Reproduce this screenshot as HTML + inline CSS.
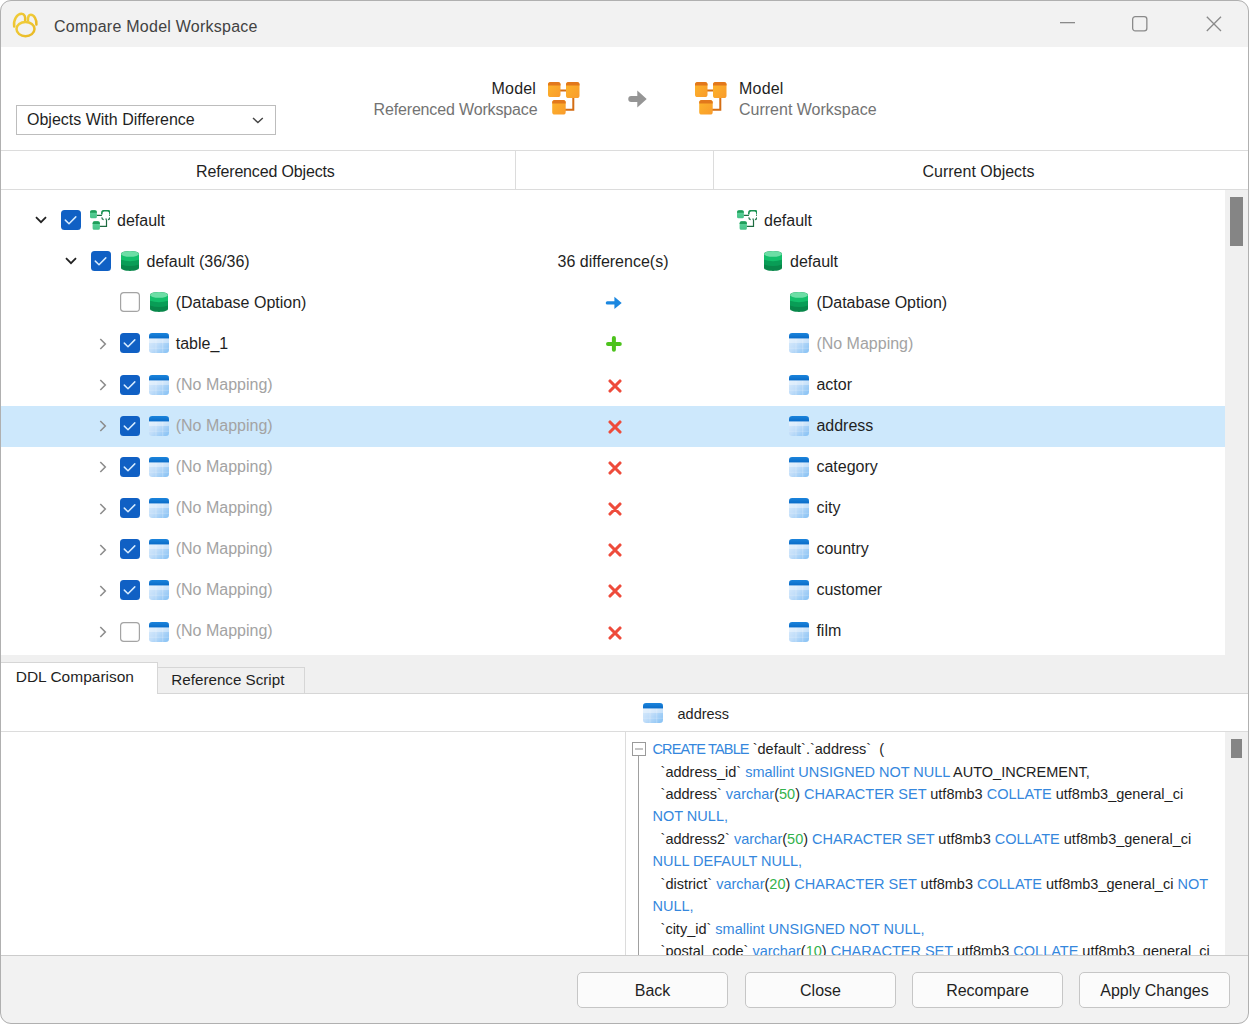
<!DOCTYPE html>
<html><head><meta charset="utf-8">
<style>
*{box-sizing:border-box;margin:0;padding:0}
html,body{width:1249px;height:1024px;overflow:hidden;background:#fff}
body{font-family:"Liberation Sans",sans-serif;font-size:16px;color:#1f1f1f;position:relative}
.a{position:absolute;white-space:pre;line-height:18px}
.frame{position:absolute;left:0;top:0;width:1249px;height:1024px;border:1px solid #b0b0b0;border-radius:11px;box-shadow:0 0 0 30px #fff;z-index:100}
.ln{position:absolute;background:#dadada}
svg{position:absolute;overflow:visible}
.cb{position:absolute;width:20px;height:20px;border-radius:3.5px;background:#1060c4}
.cb.u{background:#fff;border:1.3px solid #9a9a9a}
.gray{color:#a3a3a3}
.btn{position:absolute;top:972px;width:151px;height:36px;border:1px solid #c6c6c6;border-radius:5px;background:#fbfbfb;text-align:center;line-height:34px;font-size:16px;color:#1f1f1f}
.code{color:#1e1e1e}
.code .k{color:#3587dd}
.code .n{color:#33b24c}
</style></head><body>
<svg width="0" height="0" style="position:absolute">
<defs>
<symbol id="tbl" viewBox="0 0 20 20">
<clipPath id="tclip"><rect width="20" height="20" rx="3.2"/></clipPath>
<linearGradient id="tgrad" x1="0" y1="0" x2="1" y2="1"><stop offset="0" stop-color="#e4f1fd"/><stop offset="0.5" stop-color="#c0ddf9"/><stop offset="1" stop-color="#84c0f4"/></linearGradient>
<linearGradient id="tband" x1="0" y1="0" x2="0" y2="1"><stop offset="0" stop-color="#1b84dc"/><stop offset="1" stop-color="#0a6cc8"/></linearGradient>
<g clip-path="url(#tclip)">
<rect width="20" height="20" fill="url(#tgrad)"/>
<rect y="5.4" width="20" height="4.6" fill="#fff" opacity="0.35"/>
<rect x="6.6" y="5.4" width="0.8" height="15" fill="#fff" opacity="0.3"/>
<rect x="13.4" y="5.4" width="0.8" height="15" fill="#fff" opacity="0.3"/>
<rect y="14.8" width="20" height="0.8" fill="#fff" opacity="0.25"/>
<rect width="20" height="5.4" fill="url(#tband)"/>
</g>
</symbol>
<symbol id="db" viewBox="0 0 18 20">
<path d="M0 2.9C0 1.3 4 0 9 0s9 1.3 9 2.9V17.1C18 18.7 14 20 9 20S0 18.7 0 17.1z" fill="#08874a"/>
<path d="M0 2.9V13.6Q9 16.6 18 13.6V2.9z" fill="#099d56"/>
<path d="M0 2.9V8.8Q9 11.6 18 8.8V2.9z" fill="#13bf6b"/>
<ellipse cx="9" cy="2.9" rx="9" ry="2.9" fill="#6cdea5"/>
</symbol>
<symbol id="mdl" viewBox="0 0 20 20">
<linearGradient id="mg" x1="0" y1="0" x2="0" y2="1"><stop offset="0" stop-color="#5fd59c"/><stop offset="1" stop-color="#45c287"/></linearGradient>
<path d="M0 2.2a2 2 0 0 1 2-2h2.9a2 2 0 0 1 2 2v4.6a1.5 1.5 0 0 1-1.5 1.5h-3.9A1.5 1.5 0 0 1 0 6.8z" fill="url(#mg)"/>
<path d="M0 2.2a2 2 0 0 1 2-2h2.9a2 2 0 0 1 2 2v0.6H0z" fill="#1f9d5a"/>
<path d="M2.6 13.3a2 2 0 0 1 2-2h3.3a2 2 0 0 1 2 2v5a1.5 1.5 0 0 1-1.5 1.5h-4.3a1.5 1.5 0 0 1-1.5-1.5z" fill="url(#mg)"/>
<path d="M2.6 13.3a2 2 0 0 1 2-2h3.3a2 2 0 0 1 2 2v0.6H2.6z" fill="#1f9d5a"/>
<path d="M6.9 5.4h5M19.2 5.4h0.9M16.5 9.6v6.8H9.9" stroke="#1d6b40" stroke-width="1.2" fill="none"/>
<path d="M11.8 4.4V3a2.4 2.4 0 0 1 2.4-2.4h3.3a2.4 2.4 0 0 1 2.4 2.4v1.4" stroke="#1a9252" stroke-width="1.6" fill="none"/>
<path d="M11.8 7.4q0.2 1.9 1.9 2.3M19.9 7.4q-0.2 1.9-1.9 2.3M15.8 8.4l0.6 1.4" stroke="#2b7a52" stroke-width="1.3" fill="none"/>
</symbol>
<symbol id="omdl" viewBox="0 0 32 33">
<linearGradient id="og" x1="0" y1="0" x2="1" y2="1"><stop offset="0" stop-color="#fdb52a"/><stop offset="1" stop-color="#f99b2c"/></linearGradient>
<path d="M11 8.5h7M25.3 16v11.8H17" stroke="#d46e14" stroke-width="2" fill="none"/>
<rect x="0" y="0" width="12.5" height="15" rx="2.6" fill="url(#og)"/>
<path d="M0 2.6A2.6 2.6 0 0 1 2.6 0h7.3a2.6 2.6 0 0 1 2.6 2.6v0.9H0z" fill="#e2781c"/>
<rect x="18" y="0" width="13.5" height="16" rx="2.6" fill="url(#og)"/>
<path d="M18 2.6A2.6 2.6 0 0 1 20.6 0h8.3a2.6 2.6 0 0 1 2.6 2.6v0.9H18z" fill="#e2781c"/>
<rect x="4.2" y="18" width="13.5" height="14.5" rx="2.6" fill="url(#og)"/>
<path d="M4.2 20.6A2.6 2.6 0 0 1 6.8 18h8.3a2.6 2.6 0 0 1 2.6 2.6v0.9H4.2z" fill="#e2781c"/>
</symbol>
<symbol id="chk" viewBox="0 0 20 20">
<rect width="20" height="20" rx="3.5" fill="#1060c4"/>
<path d="M4.3 10.1L8 13.7L14.8 6.9" stroke="#d7ecff" stroke-width="1.5" fill="none" stroke-linecap="round" stroke-linejoin="round"/>
</symbol>
<symbol id="unchk" viewBox="0 0 20 20">
<rect x="0.6" y="0.6" width="18.8" height="18.8" rx="3.2" fill="#fff" stroke="#a4a4a4" stroke-width="1.2"/>
</symbol>
<symbol id="chevd" viewBox="0 0 12 8">
<path d="M1 1.2L6 6.2L11 1.2" stroke="#222" stroke-width="1.8" fill="none"/>
</symbol>
<symbol id="chevr" viewBox="0 0 8 12">
<path d="M1.3 1L6.3 6L1.3 11" stroke="#8c8c8c" stroke-width="1.55" fill="none"/>
</symbol>
<symbol id="xr" viewBox="0 0 14 14">
<path d="M2 2L12 12M12 2L2 12" stroke="#ee4b3b" stroke-width="3.1" stroke-linecap="round"/>
</symbol>
</defs>
</svg>
<div style="position:absolute;left:0px;top:0px;width:1249px;height:47px;background:#f2f2f2;"></div>
<svg style="left:11px;top:11px" width="28" height="28" viewBox="0 0 28 28">
<defs><linearGradient id="gold" x1="0" y1="0" x2="1" y2="1"><stop offset="0" stop-color="#f1cf3c"/><stop offset="1" stop-color="#e9b824"/></linearGradient></defs>
<path d="M3.2 15.5C2.2 9 6 2.8 10.5 2.8C13.5 2.8 14.6 6 14.1 9.5" stroke="url(#gold)" stroke-width="2.5" fill="none" stroke-linecap="round"/>
<path d="M17 9.2C16.8 5.2 18 3.8 19.8 3.8C23 3.8 25.9 8.5 25.4 13.6" stroke="url(#gold)" stroke-width="2.5" fill="none" stroke-linecap="round"/>
<ellipse cx="14.5" cy="18.1" rx="9" ry="7.1" stroke="url(#gold)" stroke-width="2.5" fill="none"/>
</svg>
<div class="a" style="left:54px;top:17.76px;font-size:16px;line-height:18px;color:#424242;letter-spacing:0.25px;">Compare Model Workspace</div>
<svg style="left:1060px;top:22px" width="16" height="2"><rect x="0" y="0" width="15" height="1.3" fill="#8a8a8a"/></svg>
<svg style="left:1132px;top:16px" width="16" height="16"><rect x="0.65" y="0.65" width="14.2" height="14.2" rx="2.6" stroke="#8a8a8a" stroke-width="1.3" fill="none"/></svg>
<svg style="left:1206px;top:16px" width="16" height="16"><path d="M0.8 0.8L15 15M15 0.8L0.8 15" stroke="#8a8a8a" stroke-width="1.3"/></svg>
<div style="position:absolute;left:16px;top:105px;width:260px;height:30px;border:1px solid #bdbdbd;background:#fff"></div>
<div class="a" style="left:27px;top:111.46px;font-size:16px;line-height:18px;color:#1f1f1f;">Objects With Difference</div>
<svg style="left:252px;top:117px" width="12" height="7"><path d="M1 1L5.9 5.6L10.8 1" stroke="#444" stroke-width="1.4" fill="none"/></svg>
<div class="a" style="left:491.5px;top:80.16px;font-size:16px;line-height:18px;color:#1f1f1f;letter-spacing:0.2px;">Model</div>
<div class="a" style="left:373.5px;top:100.86px;font-size:16px;line-height:18px;color:#737373;letter-spacing:-0.15px;">Referenced Workspace</div>
<svg style="left:548px;top:82px;" width="32" height="33"><use href="#omdl"/></svg>
<svg style="left:627px;top:90px" width="21" height="19"><path d="M4.2 6.1H10.3V0.6L19.7 9.1L10.3 17.6V12H4.2A2.95 2.95 0 0 1 4.2 6.1z" fill="#959595"/></svg>
<svg style="left:695px;top:82px;" width="32" height="33"><use href="#omdl"/></svg>
<div class="a" style="left:739px;top:80.16px;font-size:16px;line-height:18px;color:#1f1f1f;letter-spacing:0.2px;">Model</div>
<div class="a" style="left:739px;top:100.86px;font-size:16px;line-height:18px;color:#737373;">Current Workspace</div>
<div style="position:absolute;left:1px;top:150px;width:1247px;height:1px;background:#dcdcdc;"></div>
<div style="position:absolute;left:1px;top:189px;width:1247px;height:1px;background:#dcdcdc;"></div>
<div style="position:absolute;left:515px;top:150px;width:1px;height:39px;background:#dcdcdc;"></div>
<div style="position:absolute;left:713px;top:150px;width:1px;height:39px;background:#dcdcdc;"></div>
<div class="a" style="left:196px;top:163.46px;font-size:16px;line-height:18px;color:#1f1f1f;letter-spacing:-0.15px;">Referenced Objects</div>
<div class="a" style="left:922.5px;top:163.46px;font-size:16px;line-height:18px;color:#1f1f1f;">Current Objects</div>
<div style="position:absolute;left:1px;top:406px;width:1224px;height:41px;background:#cde8fc;"></div>
<div style="position:absolute;left:1225px;top:190px;width:23px;height:465px;background:#f0f0f0;"></div>
<div style="position:absolute;left:1230px;top:197px;width:13px;height:49px;background:#858585;"></div>
<svg style="left:35px;top:216px;" width="12" height="8"><use href="#chevd"/></svg>
<svg style="left:61px;top:210px;" width="20" height="20"><use href="#chk"/></svg>
<svg style="left:90px;top:210px;" width="20" height="20"><use href="#mdl"/></svg>
<div class="a" style="left:117px;top:211.56px;font-size:16px;line-height:18px;">default</div>
<svg style="left:737px;top:210px;" width="20" height="20"><use href="#mdl"/></svg>
<div class="a" style="left:764px;top:211.56px;font-size:16px;line-height:18px;">default</div>
<svg style="left:65px;top:257px;" width="12" height="8"><use href="#chevd"/></svg>
<svg style="left:91px;top:251px;" width="20" height="20"><use href="#chk"/></svg>
<svg style="left:121px;top:251px;" width="18" height="20"><use href="#db"/></svg>
<div class="a" style="left:146.5px;top:252.64px;font-size:16px;line-height:18px;">default (36/36)</div>
<div class="a" style="left:557.6px;top:252.64px;font-size:16px;line-height:18px;">36 difference(s)</div>
<svg style="left:764px;top:251px;" width="18" height="20"><use href="#db"/></svg>
<div class="a" style="left:790px;top:252.64px;font-size:16px;line-height:18px;">default</div>
<svg style="left:120px;top:292px;" width="20" height="20"><use href="#unchk"/></svg>
<svg style="left:150px;top:292px;" width="18" height="20"><use href="#db"/></svg>
<div class="a" style="left:175.7px;top:293.72px;font-size:16px;line-height:18px;">(Database Option)</div>
<svg style="left:605px;top:296px" width="18" height="14"><path d="M2.4 5.2H9.4V0.8L16.7 6.9L9.4 12.9V8.6H2.4A1.7 1.7 0 0 1 2.4 5.2z" fill="#1b87e0"/></svg>
<svg style="left:790px;top:292px;" width="18" height="20"><use href="#db"/></svg>
<div class="a" style="left:816.4px;top:293.72px;font-size:16px;line-height:18px;">(Database Option)</div>
<svg style="left:98.5px;top:338px;" width="8" height="12"><use href="#chevr"/></svg>
<svg style="left:120px;top:333px;" width="20" height="20"><use href="#chk"/></svg>
<svg style="left:149px;top:333px;" width="20" height="20"><use href="#tbl"/></svg>
<div class="a" style="left:175.7px;top:334.80px;font-size:16px;line-height:18px;">table_1</div>
<svg style="left:605px;top:335px" width="18" height="18"><path d="M8.9 3V14.8M3 8.9H14.8" stroke="#4cc21c" stroke-width="4" stroke-linecap="round"/></svg>
<svg style="left:789px;top:333px;" width="20" height="20"><use href="#tbl"/></svg>
<div class="a" style="left:816.4px;top:334.80px;font-size:16px;line-height:18px;color:#a3a3a3;">(No Mapping)</div>
<svg style="left:98.5px;top:379px;" width="8" height="12"><use href="#chevr"/></svg>
<svg style="left:120px;top:375px;" width="20" height="20"><use href="#chk"/></svg>
<svg style="left:149px;top:375px;" width="20" height="20"><use href="#tbl"/></svg>
<div class="a" style="left:175.7px;top:375.88px;font-size:16px;line-height:18px;color:#a3a3a3;">(No Mapping)</div>
<svg style="left:607.5px;top:379px;" width="14" height="14"><use href="#xr"/></svg>
<svg style="left:789px;top:375px;" width="20" height="20"><use href="#tbl"/></svg>
<div class="a" style="left:816.4px;top:375.88px;font-size:16px;line-height:18px;">actor</div>
<svg style="left:98.5px;top:420px;" width="8" height="12"><use href="#chevr"/></svg>
<svg style="left:120px;top:416px;" width="20" height="20"><use href="#chk"/></svg>
<svg style="left:149px;top:416px;" width="20" height="20"><use href="#tbl"/></svg>
<div class="a" style="left:175.7px;top:416.96px;font-size:16px;line-height:18px;color:#a3a3a3;">(No Mapping)</div>
<svg style="left:607.5px;top:420px;" width="14" height="14"><use href="#xr"/></svg>
<svg style="left:789px;top:416px;" width="20" height="20"><use href="#tbl"/></svg>
<div class="a" style="left:816.4px;top:416.96px;font-size:16px;line-height:18px;">address</div>
<svg style="left:98.5px;top:461px;" width="8" height="12"><use href="#chevr"/></svg>
<svg style="left:120px;top:457px;" width="20" height="20"><use href="#chk"/></svg>
<svg style="left:149px;top:457px;" width="20" height="20"><use href="#tbl"/></svg>
<div class="a" style="left:175.7px;top:458.04px;font-size:16px;line-height:18px;color:#a3a3a3;">(No Mapping)</div>
<svg style="left:607.5px;top:461px;" width="14" height="14"><use href="#xr"/></svg>
<svg style="left:789px;top:457px;" width="20" height="20"><use href="#tbl"/></svg>
<div class="a" style="left:816.4px;top:458.04px;font-size:16px;line-height:18px;">category</div>
<svg style="left:98.5px;top:503px;" width="8" height="12"><use href="#chevr"/></svg>
<svg style="left:120px;top:498px;" width="20" height="20"><use href="#chk"/></svg>
<svg style="left:149px;top:498px;" width="20" height="20"><use href="#tbl"/></svg>
<div class="a" style="left:175.7px;top:499.12px;font-size:16px;line-height:18px;color:#a3a3a3;">(No Mapping)</div>
<svg style="left:607.5px;top:502px;" width="14" height="14"><use href="#xr"/></svg>
<svg style="left:789px;top:498px;" width="20" height="20"><use href="#tbl"/></svg>
<div class="a" style="left:816.4px;top:499.12px;font-size:16px;line-height:18px;">city</div>
<svg style="left:98.5px;top:544px;" width="8" height="12"><use href="#chevr"/></svg>
<svg style="left:120px;top:539px;" width="20" height="20"><use href="#chk"/></svg>
<svg style="left:149px;top:539px;" width="20" height="20"><use href="#tbl"/></svg>
<div class="a" style="left:175.7px;top:540.20px;font-size:16px;line-height:18px;color:#a3a3a3;">(No Mapping)</div>
<svg style="left:607.5px;top:543px;" width="14" height="14"><use href="#xr"/></svg>
<svg style="left:789px;top:539px;" width="20" height="20"><use href="#tbl"/></svg>
<div class="a" style="left:816.4px;top:540.20px;font-size:16px;line-height:18px;">country</div>
<svg style="left:98.5px;top:585px;" width="8" height="12"><use href="#chevr"/></svg>
<svg style="left:120px;top:580px;" width="20" height="20"><use href="#chk"/></svg>
<svg style="left:149px;top:580px;" width="20" height="20"><use href="#tbl"/></svg>
<div class="a" style="left:175.7px;top:581.28px;font-size:16px;line-height:18px;color:#a3a3a3;">(No Mapping)</div>
<svg style="left:607.5px;top:584px;" width="14" height="14"><use href="#xr"/></svg>
<svg style="left:789px;top:580px;" width="20" height="20"><use href="#tbl"/></svg>
<div class="a" style="left:816.4px;top:581.28px;font-size:16px;line-height:18px;">customer</div>
<svg style="left:98.5px;top:626px;" width="8" height="12"><use href="#chevr"/></svg>
<svg style="left:120px;top:622px;" width="20" height="20"><use href="#unchk"/></svg>
<svg style="left:149px;top:622px;" width="20" height="20"><use href="#tbl"/></svg>
<div class="a" style="left:175.7px;top:622.36px;font-size:16px;line-height:18px;color:#a3a3a3;">(No Mapping)</div>
<svg style="left:607.5px;top:626px;" width="14" height="14"><use href="#xr"/></svg>
<svg style="left:789px;top:622px;" width="20" height="20"><use href="#tbl"/></svg>
<div class="a" style="left:816.4px;top:622.36px;font-size:16px;line-height:18px;">film</div>
<div style="position:absolute;left:1px;top:655px;width:1247px;height:39px;background:#f0f0f0;"></div>
<div style="position:absolute;left:1px;top:693px;width:1247px;height:1px;background:#d6d6d6;"></div>
<div style="position:absolute;left:1px;top:662px;width:157px;height:32px;background:#fff;border-top:1px solid #d6d6d6;border-right:1px solid #d6d6d6"></div>
<div style="position:absolute;left:157px;top:667px;width:148px;height:27px;background:#f0f0f0;border:1px solid #d6d6d6"></div>
<div class="a" style="left:15.7px;top:667.63px;font-size:15.5px;line-height:18px;">DDL Comparison</div>
<div class="a" style="left:171.3px;top:671.43px;font-size:15.2px;line-height:17px;">Reference Script</div>
<svg style="left:643px;top:703px;" width="20" height="20"><use href="#tbl"/></svg>
<div class="a" style="left:677.5px;top:705.98px;font-size:14.5px;line-height:17px;">address</div>
<div style="position:absolute;left:1px;top:731px;width:1247px;height:1px;background:#dcdcdc;"></div>
<div style="position:absolute;left:625px;top:732px;width:1px;height:223px;background:#dcdcdc;"></div>
<div style="position:absolute;left:1225px;top:732px;width:23px;height:223px;background:#f0f0f0;"></div>
<div style="position:absolute;left:1231px;top:739px;width:11px;height:19px;background:#858585;"></div>
<svg style="left:632px;top:742px" width="14" height="14"><rect x="0.5" y="0.5" width="13" height="13" fill="#fff" stroke="#9a9a9a" stroke-width="1"/><path d="M3 7H11" stroke="#8a8a8a" stroke-width="1"/></svg>
<div style="position:absolute;left:638px;top:756px;width:1px;height:199px;background:#a0a0a0;"></div>
<div style="position:absolute;left:626px;top:732px;width:599px;height:223px;overflow:hidden">
<div class="a code" style="left:26.5px;top:9.08px;font-size:14.5px;line-height:17px"><span class="k" style="letter-spacing:-0.85px">CREATE TABLE</span> `default`.`address`  (</div>
<div class="a code" style="left:26.5px;top:31.54px;font-size:14.5px;line-height:17px">  `address_id` <span class="k">smallint UNSIGNED NOT NULL</span> AUTO_INCREMENT,</div>
<div class="a code" style="left:26.5px;top:54.00px;font-size:14.5px;line-height:17px">  `address` <span class="k">varchar</span>(<span class="n">50</span>) <span class="k">CHARACTER SET</span> utf8mb3 <span class="k">COLLATE</span> utf8mb3_general_ci</div>
<div class="a code" style="left:26.5px;top:76.46px;font-size:14.5px;line-height:17px"><span class="k">NOT NULL,</span></div>
<div class="a code" style="left:26.5px;top:98.92px;font-size:14.5px;line-height:17px">  `address2` <span class="k">varchar</span>(<span class="n">50</span>) <span class="k">CHARACTER SET</span> utf8mb3 <span class="k">COLLATE</span> utf8mb3_general_ci</div>
<div class="a code" style="left:26.5px;top:121.38px;font-size:14.5px;line-height:17px"><span class="k">NULL DEFAULT NULL,</span></div>
<div class="a code" style="left:26.5px;top:143.84px;font-size:14.5px;line-height:17px">  `district` <span class="k">varchar</span>(<span class="n">20</span>) <span class="k">CHARACTER SET</span> utf8mb3 <span class="k">COLLATE</span> utf8mb3_general_ci <span class="k">NOT</span></div>
<div class="a code" style="left:26.5px;top:166.30px;font-size:14.5px;line-height:17px"><span class="k">NULL,</span></div>
<div class="a code" style="left:26.5px;top:188.76px;font-size:14.5px;line-height:17px">  `city_id` <span class="k">smallint UNSIGNED NOT NULL,</span></div>
<div class="a code" style="left:26.5px;top:211.22px;font-size:14.5px;line-height:17px">  `postal_code` <span class="k">varchar</span>(<span class="n">10</span>) <span class="k">CHARACTER SET</span> utf8mb3 <span class="k">COLLATE</span> utf8mb3_general_ci</div>
</div>
<div style="position:absolute;left:1px;top:955px;width:1247px;height:69px;background:#f2f2f2;"></div>
<div style="position:absolute;left:1px;top:955px;width:1247px;height:1px;background:#cccccc;"></div>
<div class="btn" style="left:577px"></div>
<div class="a" style="left:577px;width:151px;text-align:center;top:981.50px;font-size:16px;line-height:18px;color:#1f1f1f">Back</div>
<div class="btn" style="left:745px"></div>
<div class="a" style="left:745px;width:151px;text-align:center;top:981.50px;font-size:16px;line-height:18px;color:#1f1f1f">Close</div>
<div class="btn" style="left:912px"></div>
<div class="a" style="left:912px;width:151px;text-align:center;top:981.50px;font-size:16px;line-height:18px;color:#1f1f1f">Recompare</div>
<div class="btn" style="left:1079px"></div>
<div class="a" style="left:1079px;width:151px;text-align:center;top:981.50px;font-size:16px;line-height:18px;color:#1f1f1f">Apply Changes</div>
<div class="frame"></div>
</body></html>
